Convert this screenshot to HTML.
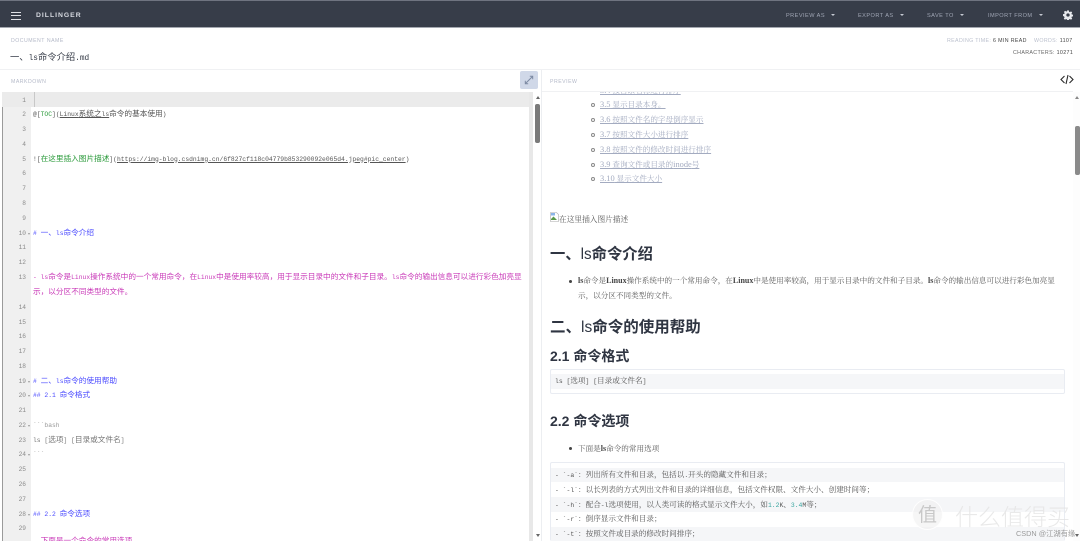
<!DOCTYPE html>
<html><head><meta charset="utf-8"><style>
*{box-sizing:border-box}
html,body{margin:0;padding:0;width:1080px;height:541px;overflow:hidden;background:#fff}
body{position:relative;font-family:"Liberation Sans","Noto Sans CJK SC",sans-serif;filter:blur(.3px)}
.a{position:absolute;white-space:nowrap}
.r{position:absolute}
.nav{color:#a0a6b5;font-size:5.6px;letter-spacing:.45px;top:12.5px;line-height:7px}
.nav:after{content:"";display:inline-block;border-left:2px solid transparent;border-right:2px solid transparent;border-top:2.5px solid #c5c9d2;margin-left:6px;vertical-align:1px}
.lbl{color:#b4b9c8;font-size:5.2px;letter-spacing:.5px;line-height:7px}
.st{font-size:5.3px;letter-spacing:.35px;line-height:7px;color:#bcc1ce}
.st b{color:#444;font-weight:400}
.n{position:absolute;width:24px;left:2px;text-align:right;font:6.2px/10px "Liberation Mono",monospace;color:#8a8a8a}
.f:after{content:"";position:absolute;left:25.5px;top:4px;border-left:1.5px solid transparent;border-right:1.5px solid transparent;border-top:2px solid #999}
.c{position:absolute;left:33px;white-space:nowrap;font:7.65px/12px "Liberation Mono","Noto Sans CJK SC",monospace;color:#555}
.c i{font-style:normal;font-size:6.33px}
.u{text-decoration:underline}
.h{color:#4a4aff}
.p{color:#c93ab8}
.gr{color:#2a9a3a}
.ga{color:#999}
.t{position:absolute;left:600px;white-space:nowrap;font:7.6px/12px "Liberation Serif","Noto Serif CJK SC",serif;color:#a3abc0;text-decoration:underline}
.t span{font-size:8.4px}
.d{position:absolute;left:590.5px;width:4px;height:4px;border:1px solid #8a8a8a;border-radius:50%}
.hd{position:absolute;left:550px;white-space:nowrap;font-family:"Liberation Sans","Noto Sans CJK SC",sans-serif;font-weight:700;color:#2f3542}
.b{position:absolute;white-space:nowrap;font:7.6px/12px "Liberation Serif","Noto Serif CJK SC",serif;color:#5a5a5a}
.b b{font-size:8px;color:#444}
.m{position:absolute;left:555px;white-space:nowrap;font:7.6px/12px "Liberation Mono","Noto Serif CJK SC",monospace;color:#555}
.m i{font-style:normal;font-size:6.4px}
.dot{position:absolute;left:569px;width:3px;height:3px;background:#444;border-radius:50%}
</style></head><body>

<div class="r" style="left:0;top:0;width:1080px;height:28px;background:#373d49;border-bottom:1.5px solid #a4a8b0;border-top:1px solid #6f7480"></div>
<div class="r" style="left:11px;top:11.500px;width:10px;height:1.3px;background:#dfe1e6"></div>
<div class="r" style="left:11px;top:15px;width:10px;height:1.3px;background:#dfe1e6"></div>
<div class="r" style="left:11px;top:18.500px;width:10px;height:1.3px;background:#dfe1e6"></div>
<div class="a" style="left:36px;top:11.500px;font-size:6.800px;line-height:8px;letter-spacing:1px;font-weight:700;color:#d8dbe2">DILLINGER</div>
<div class="a nav" style="left:786px">PREVIEW AS</div>
<div class="a nav" style="left:858px">EXPORT AS</div>
<div class="a nav" style="left:927px">SAVE TO</div>
<div class="a nav" style="left:988px">IMPORT FROM</div>
<svg class="r" style="left:1063px;top:10px" width="10" height="10" viewBox="0 0 24 24"><path fill="#e8eaee" d="M10 1h4l.6 3.2 2 .8 2.7-1.8 2.8 2.8-1.8 2.7.8 2 3.2.6v4l-3.2.6-.8 2 1.8 2.7-2.8 2.8-2.7-1.8-2 .8-.6 3.2h-4l-.6-3.2-2-.8-2.7 1.8-2.8-2.8 1.8-2.7-.8-2L0 14v-4l3.2-.6.8-2L2.200 4.700 5 1.900l2.700 1.800 2-.8zM12 8a4 4 0 1 0 0 8 4 4 0 0 0 0-8z" fill-rule="evenodd"/></svg>

<div class="a lbl" style="left:11px;top:38px">DOCUMENT NAME</div>
<div class="a" style="left:10px;top:51px;font:9.300px/14px 'Liberation Mono','Noto Sans CJK SC',monospace;color:#373d49"><span>一、</span><span style="font-size:7.800px">ls</span>命令介绍<span style="font-size:7.800px">.md</span></div>
<div class="a st" style="left:947px;top:37.500px">READING TIME: <b>6 MIN READ</b></div>
<div class="a st" style="left:1034px;top:37.500px">WORDS: <b>1107</b></div>
<div class="a st" style="left:1013px;top:50px;color:#666">CHARACTERS: <b>10271</b></div>
<div class="r" style="left:0;top:69px;width:1080px;height:1px;background:#f0f1f3"></div>
<div class="a lbl" style="left:11px;top:79px">MARKDOWN</div>
<div class="a lbl" style="left:550px;top:79px">PREVIEW</div>
<div class="r" style="left:520px;top:71px;width:18px;height:18px;background:#d0d8e8;border-radius:2px"></div>
<svg class="r" style="left:524px;top:75px" width="10" height="10" viewBox="0 0 10 10"><path d="M1.500 8.500L8.500 1.500M5.800 1.300H8.700V4.200M1.300 5.800V8.700H4.200" stroke="#7d8aa3" stroke-width="1" fill="none"/></svg>
<svg class="r" style="left:1060px;top:74px" width="14" height="11" viewBox="0 0 14 11"><path d="M4.500 2L1 5.500 4.500 9M9.500 2L13 5.500 9.500 9M8 1L6 10" stroke="#2b2b2b" stroke-width="1.100" fill="none"/></svg>
<div class="r" style="left:542px;top:91px;width:531px;height:1px;background:#f0f1f3"></div>

<div class="r" style="left:2px;top:92px;width:29px;height:449px;background:#f0f0f0;border-left:1px solid #9a9a9a"></div>
<div class="r" style="left:2px;top:92px;width:527px;height:15px;background:#ebebeb"></div>
<div class="r" style="left:34px;top:92px;width:1px;height:15px;background:#c8c8c8"></div>
<div class="r" style="left:529px;top:92px;width:4px;height:449px;background:#e8e8e8"></div>
<div class="r" style="left:536px;top:96px;border-left:2.500px solid transparent;border-right:2.500px solid transparent;border-bottom:3px solid #666"></div>
<div class="r" style="left:535px;top:104px;width:4.500px;height:39px;background:#7a7a7a;border-radius:2px"></div>
<div class="r" style="left:536px;top:534px;border-left:2.500px solid transparent;border-right:2.500px solid transparent;border-top:3px solid #666"></div>
<div class="r" style="left:541px;top:70px;width:1px;height:471px;background:#eceef1"></div>

<div class="n" style="top:96px">1</div>
<div class="n" style="top:110px">2</div>
<div class="n" style="top:125px">3</div>
<div class="n" style="top:140px">4</div>
<div class="n" style="top:154.500px">5</div>
<div class="n" style="top:169px">6</div>
<div class="n" style="top:184px">7</div>
<div class="n" style="top:199px">8</div>
<div class="n" style="top:214px">9</div>
<div class="n f" style="top:228.500px">10</div>
<div class="n" style="top:243px">11</div>
<div class="n" style="top:258px">12</div>
<div class="n" style="top:273px">13</div>
<div class="n" style="top:303px">14</div>
<div class="n" style="top:318px">15</div>
<div class="n" style="top:332px">16</div>
<div class="n" style="top:347px">17</div>
<div class="n" style="top:362px">18</div>
<div class="n f" style="top:376.500px">19</div>
<div class="n f" style="top:391px">20</div>
<div class="n" style="top:406px">21</div>
<div class="n f" style="top:421px">22</div>
<div class="n" style="top:436px">23</div>
<div class="n f" style="top:450px">24</div>
<div class="n" style="top:465px">25</div>
<div class="n" style="top:480px">26</div>
<div class="n" style="top:495px">27</div>
<div class="n f" style="top:510px">28</div>
<div class="n" style="top:524px">29</div>

<div class="c" style="top:109px"><i>@[</i><i class="gr">TOC</i><i>](</i><i class="u">Linux</i><span class="u">系统之</span><i class="u">ls</i>命令的基本使用<i>)</i></div>
<div class="c" style="top:153.500px"><i>![</i><span class="gr">在这里插入图片描述</span><i>](</i><i class="u">https://img-blog.csdnimg.cn/6f827cf118c04779b853290092e065d4.jpeg#pic_center</i><i>)</i></div>
<div class="c h" style="top:227.500px"><i># </i>一、<i>ls</i>命令介绍</div>
<div class="c p" style="top:272px"><i>- ls</i>命令是<i>Linux</i>操作系统中的一个常用命令，在<i>Linux</i>中是使用率较高，用于显示目录中的文件和子目录。<i>ls</i>命令的输出信息可以进行彩色加亮显</div>
<div class="c p" style="top:287px">示，以分区不同类型的文件。</div>
<div class="c h" style="top:375.500px"><i># </i>二、<i>ls</i>命令的使用帮助</div>
<div class="c h" style="top:390px"><i>## 2.1 </i>命令格式</div>
<div class="c ga" style="top:420px"><i>&#96;&#96;&#96;bash</i></div>
<div class="c" style="top:435px;color:#777"><i>ls [</i>选项<i>] [</i>目录或文件名<i>]</i></div>
<div class="c ga" style="top:449px"><i>&#96;&#96;&#96;</i></div>
<div class="c h" style="top:509px"><i>## 2.2 </i>命令选项</div>
<div class="c p" style="top:536px"><i>- </i>下面是一个命令的常用选项</div>

<div class="r" style="left:542px;top:92px;width:531px;height:449px;overflow:hidden">
<div class="t" style="left:58px;top:-7.500px"><span>3.4</span> 按目录名称进行排序</div>
</div>
<div class="d" style="top:103px"></div><div class="t" style="top:99px"><span>3.5</span> 显示目录本身。</div>
<div class="d" style="top:118px"></div><div class="t" style="top:113.700px"><span>3.6</span> 按照文件名的字母倒序显示</div>
<div class="d" style="top:133px"></div><div class="t" style="top:128.700px"><span>3.7</span> 按照文件大小进行排序</div>
<div class="d" style="top:148px"></div><div class="t" style="top:143.700px"><span>3.8</span> 按照文件的修改时间进行排序</div>
<div class="d" style="top:162.500px"></div><div class="t" style="top:158.700px"><span>3.9</span> 查询文件或目录的<span>inode</span>号</div>
<div class="d" style="top:177px"></div><div class="t" style="top:173.200px"><span>3.10</span> 显示文件大小</div>

<svg class="r" style="left:550px;top:212px" width="9" height="10" viewBox="0 0 9 10"><path d="M.5.500h6l2 2v7h-8z" fill="#fff" stroke="#aaa" stroke-width=".6"/><path d="M1 7l2.500-2.500L7 8H1z" fill="#5a9a4a"/><path d="M1 1h4v2.500H1z" fill="#8ab4e8"/></svg>
<div class="b" style="left:559px;top:214px;font-size:7.700px">在这里插入图片描述</div>

<div class="hd" style="top:244px;font-size:15.300px;line-height:22px">一、<span style="font-weight:400">ls</span>命令介绍</div>
<div class="dot" style="top:280px"></div>
<div class="b" style="left:578px;top:275px"><b>ls</b>命令是<b>Linux</b>操作系统中的一个常用命令，在<b>Linux</b>中是使用率较高，用于显示目录中的文件和子目录。<b>ls</b>命令的输出信息可以进行彩色加亮显</div>
<div class="b" style="left:578px;top:290px">示，以分区不同类型的文件。</div>
<div class="hd" style="top:317px;font-size:15.500px;line-height:22px">二、<span style="font-weight:400">ls</span>命令的使用帮助</div>
<div class="hd" style="top:346px;font-size:14px;line-height:20px">2.1 命令格式</div>
<div class="r" style="left:550px;top:369px;width:515px;height:25px;border:1px solid #e9ecf2;border-radius:2px;background:#fff"></div>
<div class="r" style="left:551px;top:374px;width:513px;height:15px;background:#f5f6f8"></div>
<div class="m" style="top:376px"><i>ls [</i>选项<i>] [</i>目录或文件名<i>]</i></div>
<div class="hd" style="top:411px;font-size:14px;line-height:20px">2.2 命令选项</div>
<div class="dot" style="top:447px"></div>
<div class="b" style="left:578px;top:443px">下面是<b>ls</b>命令的常用选项</div>

<div class="r" style="left:550px;top:462px;width:515px;height:79px;border:1px solid #e9ecf2;border-bottom:none;border-radius:2px;background:#fff"></div>
<div class="r" style="left:551px;top:468px;width:513px;height:14px;background:#f5f6f8"></div>
<div class="r" style="left:551px;top:497px;width:513px;height:15px;background:#f5f6f8"></div>
<div class="r" style="left:551px;top:527px;width:513px;height:14px;background:#f5f6f8"></div>
<div class="m" style="top:469.500px"><i>- `-a`</i>：列出所有文件和目录，包括以<i>.</i>开头的隐藏文件和目录；</div>
<div class="m" style="top:484.500px"><i>- `-l`</i>：以长列表的方式列出文件和目录的详细信息，包括文件权限、文件大小、创建时间等；</div>
<div class="m" style="top:499.500px"><i>- `-h`</i>：配合<i>-l</i>选项使用，以人类可读的格式显示文件大小，如<i style="color:#3aa6a0">1.2</i><i>K</i>、<i style="color:#3aa6a0">3.4</i><i>M</i>等；</div>
<div class="m" style="top:514px"><i>- `-r`</i>：倒序显示文件和目录；</div>
<div class="m" style="top:529px"><i>- `-t`</i>：按照文件或目录的修改时间排序；</div>

<div class="r" style="left:1073px;top:92px;width:7px;height:449px;background:#fdfdfd"></div>
<div class="r" style="left:1075px;top:96px;border-left:2.500px solid transparent;border-right:2.500px solid transparent;border-bottom:3px solid #888"></div>
<div class="r" style="left:1075px;top:126px;width:4.500px;height:49px;background:#8a8a8a;border-radius:2px"></div>
<div class="r" style="left:1075px;top:534px;border-left:2.500px solid transparent;border-right:2.500px solid transparent;border-top:3px solid #666"></div>

<div class="r" style="left:912px;top:498.500px;width:31px;height:31px;border-radius:50%;border:1.500px solid rgba(255,255,255,.9);background:rgba(238,238,238,.55)"></div>
<div class="a" style="left:918px;top:502px;font:19px/24px 'Noto Sans CJK SC',sans-serif;color:rgba(195,195,195,.9)">值</div>
<div class="a" style="left:955px;top:498px;font:23px/34px 'Noto Sans CJK SC',sans-serif;color:rgba(225,225,225,.75);font-weight:300">什么值得买</div>
<div class="a" style="left:1016px;top:528px;font:7.300px/11px 'Liberation Sans','Noto Sans CJK SC',sans-serif;color:#9a9a9a">CSDN @江湖有缘</div>
</body></html>
